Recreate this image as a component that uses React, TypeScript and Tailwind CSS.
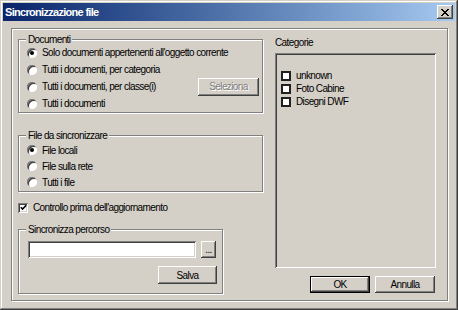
import type { ReactNode } from 'react';

/* ─── classic 3D bits ─── */
const raised =
  'bg-[#d4d0c8] shadow-[inset_-1px_-1px_#404040,inset_1px_1px_#fff,inset_-2px_-2px_#808080,inset_2px_2px_#d4d0c8]';
const sunken =
  'shadow-[inset_1px_1px_#808080,inset_-1px_-1px_#fff,inset_2px_2px_#404040,inset_-2px_-2px_#d4d0c8]';
const etched = 'border border-[#808080] shadow-[inset_1px_1px_#fff,1px_1px_#fff]';

function Radio({ checked, label }: { checked?: boolean; label: string }) {
  return (
    <div className="flex items-center gap-[5px]">
      <span className="relative w-[10px] h-[10px] rounded-full bg-white shadow-[inset_1px_1px_#808080,inset_-1px_-1px_#fff,inset_2px_2px_#404040] flex items-center justify-center">
        {checked && <span className="w-[4px] h-[4px] rounded-full bg-black" />}
      </span>
      <span>{label}</span>
    </div>
  );
}

function GroupBox({ title, className, children }: { title: string; className: string; children: ReactNode }) {
  return (
    <div className={`relative ${etched} ${className}`}>
      <span className="absolute left-[7px] top-[-7px] h-[13px] leading-[13px] px-[2px] bg-[#d4d0c8]">{title}</span>
      {children}
    </div>
  );
}

function Button({ label, className, disabled, isDefault }: { label: string; className: string; disabled?: boolean; isDefault?: boolean }) {
  return (
    <div className={`${className} ${isDefault ? 'border border-black' : ''}`}>
      <div
        className={`w-full h-full flex items-center justify-center ${raised} ${
          disabled ? 'text-[#808080] [text-shadow:1px_1px_0_#fff]' : ''
        }`}
      >
        {label}
      </div>
    </div>
  );
}

function ListCheck({ label }: { label: string }) {
  return (
    <div className="flex items-center gap-[5px] h-[13px]">
      <span className="w-[10px] h-[10px] bg-white border-2 border-[#202020]" />
      <span>{label}</span>
    </div>
  );
}

export default function App() {
  return (
    <div className="w-[458px] h-[310px] bg-[#d4d0c8] flex flex-col text-[10px] tracking-[-0.6px] text-black font-['Liberation_Sans',Arial,sans-serif] shadow-[inset_-1px_-1px_#404040,inset_1px_1px_#d4d0c8,inset_-2px_-2px_#808080,inset_2px_2px_#fff]">
      {/* Title bar */}
      <div className="mt-[3px] mx-[3px] h-[18px] flex items-center justify-between pl-[2px] pr-[2px] bg-linear-to-r from-[#0a246a] to-[#a6caf0]">
        <span className="text-white font-bold text-[11px] tracking-[-0.7px]">Sincronizzazione file</span>
        <div className={`w-[16px] h-[14px] flex items-center justify-center ${raised}`}>
          <svg width="8" height="7" viewBox="0 0 8 7" shapeRendering="crispEdges">
            <path d="M0 0h2v1H0zM6 0h2v1H6zM1 1h2v1H1zM5 1h2v1H5zM2 2h4v1H2zM3 3h2v1H3zM2 4h4v1H2zM1 5h2v1H1zM5 5h2v1H5zM0 6h2v1H0zM6 6h2v1H6z" fill="#000" />
          </svg>
        </div>
      </div>

      {/* Outer frame */}
      <div className={`ml-[11px] mt-[7px] w-[437px] h-[273px] ${etched} flex`}>
        {/* Left column */}
        <div className="pl-[6px] pt-[10px] w-[252px] flex flex-col">
          <GroupBox title="Documenti" className="w-[245px] h-[74px] pt-[4px] pl-[8px]">
            <div className="h-[17px] flex items-center"><Radio checked label="Solo documenti appertenenti all'oggetto corrente" /></div>
            <div className="h-[17px] flex items-center"><Radio label="Tutti i documenti, per categoria" /></div>
            <div className="h-[17px] flex items-center">
              <Radio label="Tutti i documenti, per classe(i)" />
              <Button label="Seleziona" disabled className="ml-auto mr-[3px] w-[61px] h-[18px]" />
            </div>
            <div className="h-[17px] flex items-center"><Radio label="Tutti i documenti" /></div>
          </GroupBox>

          <GroupBox title="File da sincronizzare" className="mt-[22px] w-[245px] h-[57px] pt-[6px] pl-[8px]">
            <div className="h-[16px] flex items-center"><Radio checked label="File locali" /></div>
            <div className="h-[16px] flex items-center"><Radio label="File sulla rete" /></div>
            <div className="h-[16px] flex items-center"><Radio label="Tutti i file" /></div>
          </GroupBox>

          <div className="mt-[9px] h-[13px] flex items-center gap-[5px]">
            <span className={`w-[10px] h-[10px] bg-white ${sunken} flex items-center justify-center`}>
              <svg width="7" height="7" viewBox="0 0 7 7">
                <path d="M0.8 3.2 L2.6 5 L6.2 1.2" stroke="#000" strokeWidth="1.6" fill="none" />
              </svg>
            </span>
            <span>Controllo prima dell'aggiornamento</span>
          </div>

          <GroupBox title="Sincronizza percorso" className="mt-[15px] w-[205px] h-[65px] pt-[11px] pl-[9px]">
            <div className="flex gap-[5px]">
              <div className={`w-[168px] h-[17px] bg-white ${sunken}`} />
              <Button label="..." className="w-[15px] h-[17px] leading-none" />
            </div>
            <div className="flex justify-end pr-[5px] mt-[8px]">
              <Button label="Salva" className="w-[59px] h-[18px]" />
            </div>
          </GroupBox>
        </div>

        {/* Right column */}
        <div className="pl-[11px] pt-[7px] flex flex-col">
          <div className="h-[13px] leading-[13px]">Categorie</div>
          <div className={`mt-[4px] w-[161px] h-[215px] ${sunken} pt-[16px] pl-[6px]`}>
            <ListCheck label="unknown" />
            <ListCheck label="Foto Cabine" />
            <ListCheck label="Disegni DWF" />
          </div>
          <div className="mt-[8px] flex justify-end gap-[5px] pr-[1px]">
            <Button label="OK" isDefault className="w-[60px] h-[17px]" />
            <Button label="Annulla" className="w-[60px] h-[17px]" />
          </div>
        </div>
      </div>
    </div>
  );
}
